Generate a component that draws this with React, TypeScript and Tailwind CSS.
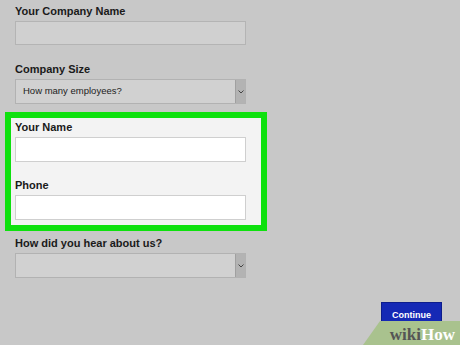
import React from 'react';

const font = { fontFamily: '"Liberation Sans", Arial, sans-serif' };

const Label: React.FC<{ text: string }> = ({ text }) => (
  <div className="h-[14px] text-[11px] leading-[14px] font-bold text-[#1a1a1a]">{text}</div>
);

const Select: React.FC<{ value?: string }> = ({ value }) => (
  <div className="flex w-[231px] h-[25px] border border-[#b2b2b2] bg-[#d1d1d1]">
    <div className="flex-1 flex items-center pl-[7px] text-[9.5px] text-[#222]">{value}</div>
    <div className="w-[10px] flex items-center justify-center bg-[#b3b3b3] border-l border-[#a0a0a0]">
      <svg width="6" height="4" viewBox="0 0 6 4">
        <path d="M0.5 0.5 L3 3 L5.5 0.5" fill="none" stroke="#444" strokeWidth="1" />
      </svg>
    </div>
  </div>
);

export default function App() {
  return (
    <div className="relative w-[460px] h-[345px] overflow-hidden bg-[#c8c8c8]" style={font}>
      <div className="pl-[15px] pt-[4px]">
        <Label text="Your Company Name" />
        <div className="mt-[3px] w-[231px] h-[24px] border border-[#b4b4b4] bg-[#d0d0d0]" />

        <div className="mt-[17px]">
          <Label text="Company Size" />
        </div>
        <div className="mt-[3px]">
          <Select value="How many employees?" />
        </div>

        <div className="mt-[8px] -ml-[10px] w-[262px] border-[6px] border-[#0ee10e] bg-[#f3f3f3] pl-[4px] pt-[2px] pb-[5px]">
          <Label text="Your Name" />
          <div className="mt-[3px] w-[231px] h-[25px] border border-[#cfcfcf] bg-white" />
          <div className="mt-[16px]">
            <Label text="Phone" />
          </div>
          <div className="mt-[3px] w-[231px] h-[25px] border border-[#cfcfcf] bg-white" />
        </div>

        <div className="mt-[5px]">
          <Label text="How did you hear about us?" />
        </div>
        <div className="mt-[3px]">
          <Select />
        </div>
      </div>

      <div className="flex justify-end pr-[18px] mt-[24px]">
        <button className="w-[61px] h-[28px] bg-[#1529b5] border border-[#0d1d8c] text-white text-[9px] font-bold">
          Continue
        </button>
      </div>

      <svg className="absolute right-0 bottom-0" width="100" height="24" viewBox="0 0 100 24">
        <polygon points="3,24 20,0 100,0 100,24" fill="#a9c28e" />
      </svg>
      <div
        className="absolute bottom-[2px] right-[5px] text-[17px] font-bold leading-none"
        style={{ fontFamily: '"Liberation Serif", "Times New Roman", serif' }}
      >
        <span className="text-[#555]">wiki</span>
        <span className="text-white">How</span>
      </div>
    </div>
  );
}
